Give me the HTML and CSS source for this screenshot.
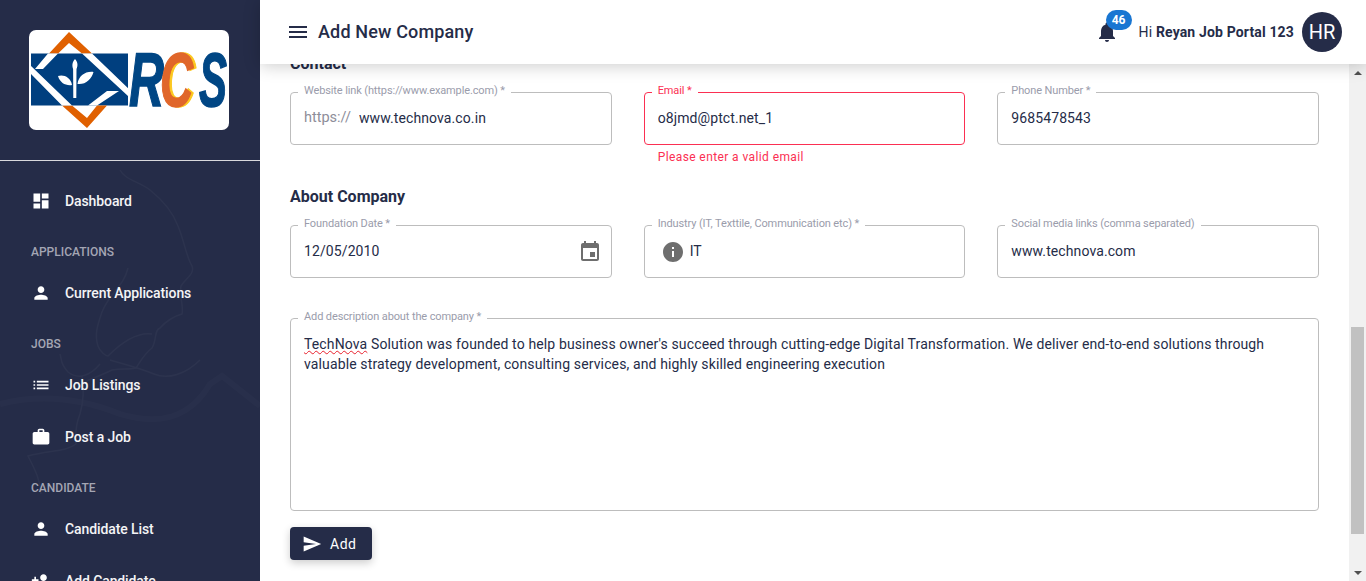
FILE: index.html
```html
<!DOCTYPE html>
<html lang="en">
<head>
    <meta charset="UTF-8">
    <meta name="viewport" content="width=device-width, initial-scale=1.0">
    <title>Add New Company</title>
    <link rel="stylesheet" href="styles.css">
</head>
<body>
    <aside class="sidebar">
        <svg class="sidebar-map" viewBox="0 0 260 581" aria-hidden="true">
            <path d="M120 170c5 10 20 12 30 20 10 8 22 20 28 36 6 14 8 30 14 40 3 8-6 12-11 20-2 8 3 22 1 28-8 2-17 8-22 14-6 2-3 12-8 20-8 6-12 14-16 20-8 2-14 0-24 2-8 4-18 8-28 12"/>
            <path d="M128 268c-4 18-18 24-26 44-4 12-8 22-4 34 2 6 8 10 10 10 14-14 30-24 44-22"/>
            <path d="M100 364c-10 12-22 16-32 8-8-8-6-12-8-18M82 376c2 12 2 24-2 38-6 14-4 24-4 30-10 8-26 6-48 12 6 12 12 22 13 38"/>
            <path d="M110 360c14 4 30 8 44 14 14 6 32 0 46-14"/>
            <path class="sidebar-map-soft" d="M0 404c40-10 80-6 120 10 40 12 70 4 90-30l12-8 38 30"/>
        </svg>
        <div class="logo-box">
            <svg class="logo" viewBox="0 0 200 100" role="img" aria-label="RCS">
                <rect class="logo-bg" width="200" height="100" rx="7"/>
                <rect class="logo-blue" x="2" y="23.500" width="97" height="52"/>
                <path class="logo-orange" d="M20 23.500 40 2 63 23.500H53L40 13 29 23.500ZM33 75.500 58 98 78 75.500H68L58 88 43 75.500Z"/>
                <path class="logo-white" d="M19 23.500H29L14 39H6ZM2 44 33 75.500H43L2 36ZM63 23.500 103 62 99 66 53 23.500ZM90 61H78L59 75.500H68Z"/>
                <path class="logo-white" d="M46 29c3 3 3 7 1.500 10l-.2 29h-3l-.2-29C43 36 43 32 46 29ZM43 55c-6 1-12-2-14-9 5-2 13 1 14 9ZM48.500 54c1-8 8-13 16-12-2 7-8 13-16 12Z"/>
                <text class="logo-r" x="100" y="76" textLength="35" lengthAdjust="spacingAndGlyphs">R</text>
                <text class="logo-c-shade" x="133.500" y="76" textLength="33" lengthAdjust="spacingAndGlyphs">C</text>
                <text class="logo-c" x="131" y="76" textLength="33" lengthAdjust="spacingAndGlyphs">C</text>
                <text class="logo-r" x="170" y="76" textLength="28" lengthAdjust="spacingAndGlyphs">S</text>
            </svg>
        </div>
        <nav class="menu">
            <a class="menu-item">
                <svg viewBox="0 0 24 24"><path d="M3 13h8V3H3v10zm0 8h8v-6H3v6zm10 0h8V11h-8v10zm0-18v6h8V3h-8z"/></svg>
                Dashboard
            </a>
            <div class="menu-label">APPLICATIONS</div>
            <a class="menu-item">
                <svg viewBox="0 0 24 24"><path d="M12 12c2.210 0 4-1.790 4-4s-1.790-4-4-4-4 1.790-4 4 1.790 4 4 4zm0 2c-2.670 0-8 1.340-8 4v2h16v-2c0-2.660-5.330-4-8-4z"/></svg>
                Current Applications
            </a>
            <div class="menu-label">JOBS</div>
            <a class="menu-item">
                <svg viewBox="0 0 24 24"><path d="M3 13h2v-2H3v2zm0 4h2v-2H3v2zm0-8h2V7H3v2zm4 4h14v-2H7v2zm0 4h14v-2H7v2zM7 7v2h14V7H7z"/></svg>
                Job Listings
            </a>
            <a class="menu-item">
                <svg viewBox="0 0 24 24"><path d="M20 6h-4V4c0-1.110-.89-2-2-2h-4c-1.110 0-2 .89-2 2v2H4c-1.110 0-1.990.89-1.990 2L2 19c0 1.110.89 2 2 2h16c1.110 0 2-.89 2-2V8c0-1.110-.89-2-2-2zm-6 0h-4V4h4v2z"/></svg>
                Post a Job
            </a>
            <div class="menu-label">CANDIDATE</div>
            <a class="menu-item">
                <svg viewBox="0 0 24 24"><path d="M12 12c2.210 0 4-1.790 4-4s-1.790-4-4-4-4 1.790-4 4 1.790 4 4 4zm0 2c-2.670 0-8 1.340-8 4v2h16v-2c0-2.660-5.330-4-8-4z"/></svg>
                Candidate List
            </a>
            <a class="menu-item">
                <svg viewBox="0 0 24 24"><path d="M15 12c2.210 0 4-1.790 4-4s-1.790-4-4-4-4 1.790-4 4 1.790 4 4 4zm-9-2V7H4v3H1v2h3v3h2v-3h3v-2H6zm9 4c-2.670 0-8 1.340-8 4v2h16v-2c0-2.660-5.330-4-8-4z"/></svg>
                Add Candidate
            </a>
        </nav>
    </aside>

    <div class="page">
        <header class="topbar">
            <svg class="icon" viewBox="0 0 24 24"><path d="M3 18h18v-2H3v2zm0-5h18v-2H3v2zm0-7v2h18V6H3z"/></svg>
            <h1 class="page-title">Add New Company</h1>
            <div class="bell">
                <svg class="icon" viewBox="0 0 24 24"><path d="M12 22c1.100 0 2-.9 2-2h-4c0 1.100.89 2 2 2zm6-6v-5c0-3.070-1.640-5.640-4.500-6.320V4c0-.83-.67-1.500-1.500-1.500s-1.500.67-1.500 1.500v.68C7.630 5.360 6 7.920 6 11v5l-2 2v1h16v-1l-2-2z"/></svg>
                <span class="badge">46</span>
            </div>
            <div class="greeting">Hi <b>Reyan Job Portal 123</b></div>
            <div class="avatar">HR</div>
        </header>

        <div class="body-row">
            <main class="content">
                <h3 class="section-title first">Contact</h3>
                <div class="form-row">
                    <div class="field">
                        <fieldset class="box">
                            <legend>Website link (https://www.example.com) *</legend>
                            <span class="prefix">https://</span>
                            <input type="text" value="www.technova.co.in">
                        </fieldset>
                    </div>
                    <div class="field">
                        <fieldset class="box box-error">
                            <legend>Email *</legend>
                            <input type="text" value="o8jmd@ptct.net_1">
                        </fieldset>
                        <p class="error-text">Please enter a valid email</p>
                    </div>
                    <div class="field">
                        <fieldset class="box">
                            <legend>Phone Number *</legend>
                            <input type="text" value="9685478543">
                        </fieldset>
                    </div>
                </div>

                <h3 class="section-title">About Company</h3>
                <div class="form-row">
                    <div class="field">
                        <fieldset class="box box-date">
                            <legend>Foundation Date *</legend>
                            <input type="text" value="12/05/2010">
                            <svg class="icon icon-grey" viewBox="0 0 24 24"><path d="M17 12h-5v5h5v-5zM16 1v2H8V1H6v2H5c-1.110 0-1.990.9-1.990 2L3 19c0 1.100.89 2 2 2h14c1.100 0 2-.9 2-2V5c0-1.100-.9-2-2-2h-1V1h-2zm3 18H5V8h14v11z"/></svg>
                        </fieldset>
                    </div>
                    <div class="field">
                        <fieldset class="box box-info">
                            <legend>Industry (IT, Texttile, Communication etc) *</legend>
                            <svg class="icon icon-grey" viewBox="0 0 24 24"><path d="M12 2C6.480 2 2 6.480 2 12s4.480 10 10 10 10-4.480 10-10S17.520 2 12 2zm1 15h-2v-6h2v6zm0-8h-2V7h2v2z"/></svg>
                            <input type="text" value="IT">
                        </fieldset>
                    </div>
                    <div class="field">
                        <fieldset class="box">
                            <legend>Social media links (comma separated)</legend>
                            <input type="text" value="www.technova.com">
                        </fieldset>
                    </div>
                </div>

                <fieldset class="box box-text">
                    <legend>Add description about the company *</legend>
                    <div class="description"><span class="misspelt">TechNova</span> Solution was founded to help business owner's succeed through cutting-edge Digital Transformation. We deliver end-to-end solutions through valuable strategy development, consulting services, and highly skilled engineering execution</div>
                </fieldset>

                <button class="add-btn" type="button">
                    <svg viewBox="0 0 24 24"><path d="M2.010 21L23 12 2.010 3 2 10l15 2-15 2z"/></svg>
                    Add
                </button>
            </main>

            <div class="scrollbar">
                <span class="arrow arrow-up"></span>
                <div class="track"><div class="thumb"></div></div>
                <span class="arrow arrow-down"></span>
            </div>
        </div>
    </div>
</body>
</html>
```
FILE: styles.css
```css
* {
    box-sizing: border-box;
}
html, body {
    height: 100%;
}
body {
    margin: 0;
    display: flex;
    overflow: hidden;
    font-family: Roboto, "Liberation Sans", sans-serif;
    color: #252c48;
    background: #fff;
}

/* sidebar */
.sidebar {
    position: relative;
    width: 260px;
    flex-shrink: 0;
    overflow: hidden;
    background: #252c48;
    color: #fff;
}
.sidebar-map {
    position: absolute;
    left: 0;
    top: 0;
    width: 260px;
    height: 581px;
    fill: none;
    stroke: #fff;
    stroke-width: 1.500;
    opacity: 0.03;
}
.sidebar-map-soft {
    stroke-width: 6;
    opacity: 0.5;
}
.logo-box {
    position: relative;
    height: 161px;
    padding: 30px 29px 0;
    border-bottom: 1px solid #d8d8dc;
}
.logo {
    display: block;
    width: 200px;
    height: 100px;
}
.logo-bg, .logo-white {
    fill: #fff;
}
.logo-blue {
    fill: #003f7f;
}
.logo-orange {
    fill: #e06000;
}
.logo-r, .logo-c, .logo-c-shade {
    font-family: "Liberation Sans", sans-serif;
    font-style: italic;
    font-weight: 700;
    font-size: 76px;
    fill: #004684;
    stroke: #004684;
    stroke-width: 1.500;
}
.logo-c {
    fill: #e0662a;
    stroke: #e0662a;
}
.logo-c-shade {
    fill: #fcc820;
    stroke: #fcc820;
}
.menu {
    position: relative;
    padding-top: 14px;
}
.menu-item {
    display: flex;
    align-items: center;
    gap: 14px;
    height: 52px;
    padding-left: 31px;
    font-size: 14px;
    font-weight: 500;
    letter-spacing: -0.1px;
    color: #f4f4f6;
}
.menu-item svg {
    width: 20px;
    height: 20px;
    flex-shrink: 0;
    fill: #fff;
}
.menu-label {
    height: 40px;
    padding: 17px 0 7px 31px;
    font-size: 12px;
    line-height: 16px;
    font-weight: 500;
    color: #a4a6b4;
}

/* top bar */
.page {
    flex: 1;
    min-width: 0;
    display: flex;
    flex-direction: column;
}
.topbar {
    position: relative;
    z-index: 2;
    height: 64px;
    flex-shrink: 0;
    display: flex;
    align-items: center;
    padding: 0 24px 0 26px;
    background: #fff;
    box-shadow: 0 2px 16px rgba(0,0,0,0.2);
}
.icon {
    width: 24px;
    height: 24px;
    flex-shrink: 0;
    fill: #252c48;
}
.icon-grey {
    fill: #6e6e6e;
}
.page-title {
    flex: 1;
    margin: 0 0 2px 8px;
    font-size: 18px;
    font-weight: 500;
    letter-spacing: 0.15px;
}
.bell {
    position: relative;
    display: flex;
    margin-right: 20px;
}
.badge {
    position: absolute;
    left: 11px;
    top: -10px;
    width: 26px;
    height: 20px;
    border-radius: 10px;
    background: #1976d2;
    color: #fff;
    font-size: 12px;
    font-weight: 700;
    line-height: 20px;
    text-align: center;
}
.greeting {
    font-size: 14px;
    letter-spacing: 0.15px;
    margin-right: 8px;
}
.greeting b {
    font-weight: 700;
}
.avatar {
    width: 40px;
    height: 40px;
    border-radius: 50%;
    background: #252c48;
    color: #fff;
    font-size: 20px;
    line-height: 40px;
    text-align: center;
}

/* form */
.body-row {
    flex: 1;
    min-height: 0;
    display: flex;
}
.content {
    flex: 1;
    min-width: 0;
    padding: 0 30px;
}
.section-title {
    margin: 23px 0 11px;
    font-size: 16px;
    line-height: 20px;
    font-weight: 700;
}
.section-title.first {
    margin-top: -10px;
}
.form-row {
    display: grid;
    grid-template-columns: repeat(3, 1fr);
    gap: 32px;
}
.box {
    display: flex;
    align-items: center;
    height: 60px;
    min-width: 0;
    margin: 0;
    padding: 0 13px 9px;
    border: 1px solid #bdbdbd;
    border-radius: 4px;
}
.box legend {
    margin-left: -6px;
    padding: 0 6px 4px;
    font-size: 11px;
    line-height: 11px;
    letter-spacing: -0.12px;
    color: #9a9cab;
}
.box input {
    flex: 1;
    min-width: 0;
    height: 30px;
    padding: 0;
    border: none;
    outline: none;
    font: inherit;
    font-size: 14px;
    letter-spacing: 0.1px;
    color: #252c48;
    background: transparent;
}
.prefix {
    margin-right: 8px;
    font-size: 14.500px;
    color: #8e8e9a;
}
.box-error {
    border-color: #fb2f52;
}
.box-error legend, .error-text {
    color: #fb2f52;
}
.box-date .icon {
    margin: 2px -4px 0 0;
}
.box-info .icon {
    margin: 2px 5px 0 3px;
}
.error-text {
    margin: 5px 0 0 14px;
    font-size: 12px;
    line-height: 14px;
    letter-spacing: 0.4px;
}
.box-text {
    display: block;
    height: 200px;
    margin-top: 33px;
}
.description {
    padding-top: 8px;
    font-size: 14px;
    line-height: 20px;
    letter-spacing: 0.13px;
}
.misspelt {
    text-decoration: underline wavy #e8202c 1px;
    text-decoration-skip-ink: none;
}
.add-btn {
    display: flex;
    align-items: center;
    gap: 8px;
    width: 82px;
    height: 33px;
    margin-top: 16px;
    padding: 0 0 0 12px;
    border: none;
    border-radius: 4px;
    background: #252c48;
    color: #fff;
    font: inherit;
    font-size: 14px;
    letter-spacing: 0.5px;
    box-shadow: 0 3px 8px rgba(0,0,0,0.2);
}
.add-btn svg {
    width: 20px;
    height: 20px;
    fill: #fff;
}

/* scrollbar of the page */
.scrollbar {
    width: 17px;
    flex-shrink: 0;
    display: flex;
    flex-direction: column;
    background: #f1f1f1;
}
.arrow {
    height: 17px;
    flex-shrink: 0;
    display: flex;
    align-items: center;
    justify-content: center;
}
.arrow::before {
    content: "";
    border-left: 4px solid transparent;
    border-right: 4px solid transparent;
}
.arrow-up::before {
    border-bottom: 4px solid #505050;
}
.arrow-down::before {
    border-top: 4px solid #505050;
}
.track {
    flex: 1;
    display: flex;
    flex-direction: column;
    justify-content: flex-end;
    padding: 0 2px 30px;
}
.thumb {
    height: 207px;
    background: #c1c1c1;
}
```
